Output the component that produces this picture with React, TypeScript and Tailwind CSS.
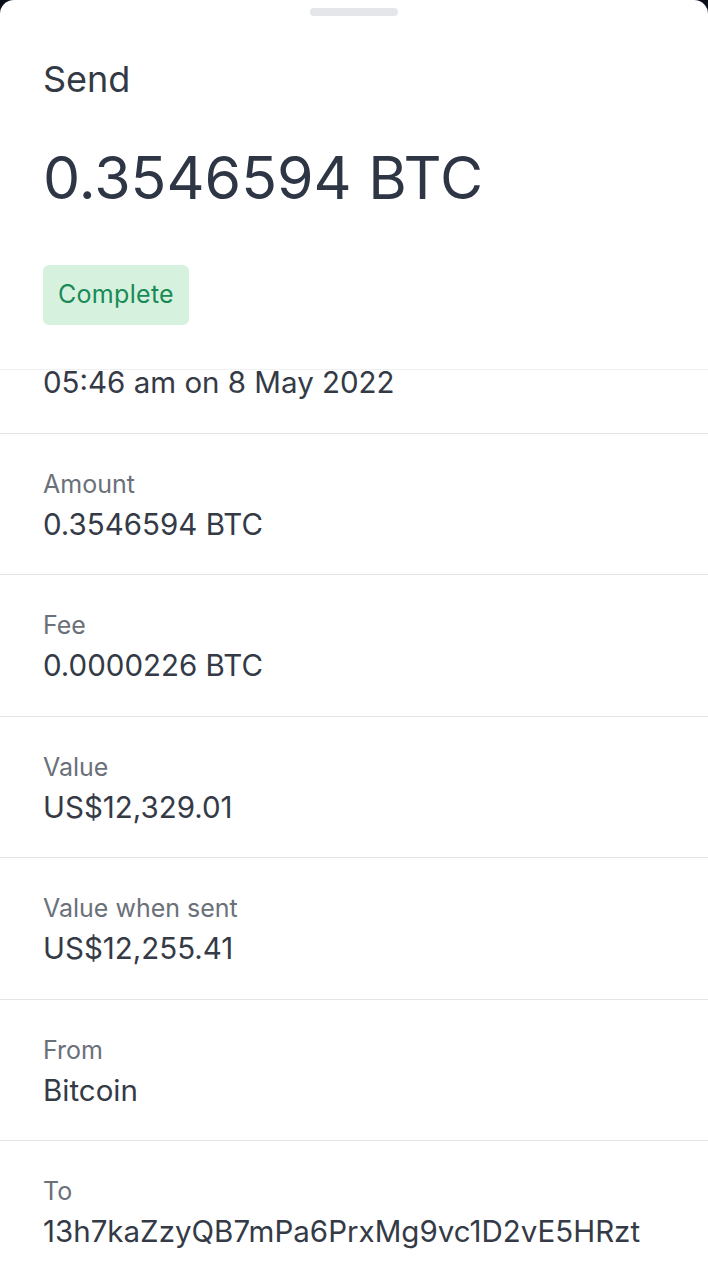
import React from 'react'

interface DetailRowProps {
  label: string
  value: string
}

// the list is scrolled a little, so the date row's label sits under the header
const rows: DetailRowProps[] = [
  { label: '', value: '05:46 am on 8 May 2022' },
  { label: 'Amount', value: '0.3546594 BTC' },
  { label: 'Fee', value: '0.0000226 BTC' },
  { label: 'Value', value: 'US$12,329.01' },
  { label: 'Value when sent', value: 'US$12,255.41' },
  { label: 'From', value: 'Bitcoin' },
  { label: 'To', value: '13h7kaZzyQB7mPa6PrxMg9vc1D2vE5HRzt' },
]

const DetailRow: React.FC<DetailRowProps & { first?: boolean }> = ({
  label,
  value,
  first,
}) => (
  <div
    className={`px-[43px] pt-[35px] pb-[32.5px] ${
      first ? 'border-t border-transparent' : 'border-t border-[#e3e4e6]'
    }`}
  >
    <div className="h-[30px] text-[25px] leading-[30px] text-[#6b7079]">
      {label}
    </div>
    <div className="mt-[7px] text-[29.5px] leading-[36px] text-[#343a46]">
      {value}
    </div>
  </div>
)

export default function App() {
  return (
    <div
      className="h-[1280px] bg-[#0b0f17]"
      style={{ fontFamily: 'Inter, "Noto Sans", sans-serif' }}
    >
      <div className="flex h-full flex-col overflow-hidden rounded-t-[14px] bg-white">
        <div className="border-b border-[#f0f1f2] px-[43px] pt-[8px] pb-[44px]">
          <div className="mx-auto h-[8px] w-[88px] rounded-full bg-[#e4e6ea]" />
          <h1 className="mt-[41px] text-[36px] leading-[44px] font-normal text-[#333a45]">
            Send
          </h1>
          <div className="mt-[42px] text-[59px] leading-[70px] text-[#2e3646]">
            0.3546594 BTC
          </div>
          <div className="mt-[52px] inline-flex h-[60px] items-center rounded-[6px] bg-[#d6f2df] px-[15px] text-[25px] tracking-[0.3px] text-[#1a8a56]">
            Complete
          </div>
        </div>
        <div className="flex-1 overflow-hidden">
          <div className="-mt-[79px]">
            {rows.map((row, i) => (
              <DetailRow key={row.value} {...row} first={i === 0} />
            ))}
          </div>
        </div>
      </div>
    </div>
  )
}
